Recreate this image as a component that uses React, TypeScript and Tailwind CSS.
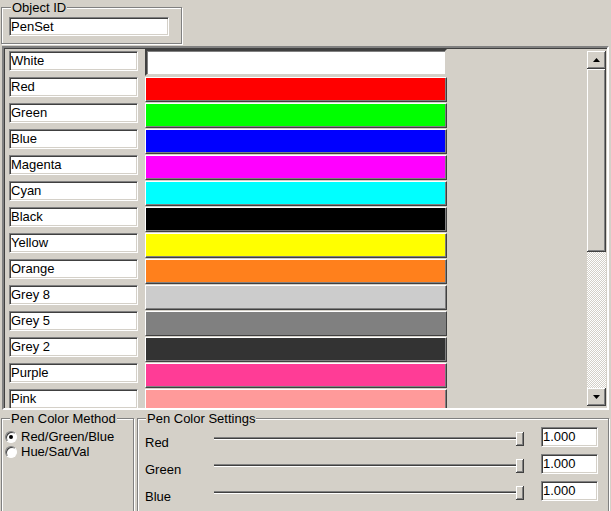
import React from "react";

const pens = [
  { name: "White", color: "#ffffff" },
  { name: "Red", color: "#ff0000" },
  { name: "Green", color: "#00ff00" },
  { name: "Blue", color: "#0000ff" },
  { name: "Magenta", color: "#ff00ff" },
  { name: "Cyan", color: "#00ffff" },
  { name: "Black", color: "#000000" },
  { name: "Yellow", color: "#ffff00" },
  { name: "Orange", color: "#ff801c" },
  { name: "Grey 8", color: "#cccccc" },
  { name: "Grey 5", color: "#808080" },
  { name: "Grey 2", color: "#333333" },
  { name: "Purple", color: "#ff3c96" },
  { name: "Pink", color: "#ff9a9a" },
];

const raised =
  "bg-[#d4d0c8] shadow-[inset_-1px_-1px_0_#404040,inset_1px_1px_0_#ffffff,inset_-2px_-2px_0_#808080,inset_2px_2px_0_#d4d0c8]";
const sunken =
  "bg-white border border-t-[#808080] border-l-[#808080] border-b-white border-r-white shadow-[inset_1px_1px_0_#404040,inset_-1px_-1px_0_#d4d0c8]";
const etched =
  "border border-[#808080] shadow-[inset_1px_1px_0_#ffffff,1px_1px_0_#ffffff]";

function Arrow({ up }: { up?: boolean }) {
  return (
    <svg width="7" height="4" viewBox="0 0 7 4">
      <polygon points={up ? "3.5,0 7,4 0,4" : "0,0 7,0 3.5,4"} fill="#000" />
    </svg>
  );
}

function Radio({ checked, label }: { checked?: boolean; label: string }) {
  return (
    <div className="flex h-[15px] items-center gap-[4px]">
      <div className="flex h-[12px] w-[12px] items-center justify-center rounded-full border border-t-[#808080] border-l-[#808080] border-b-white border-r-white bg-white shadow-[inset_1px_1px_0_#404040]">
        {checked && <div className="h-[4px] w-[4px] rounded-full bg-black" />}
      </div>
      <span>{label}</span>
    </div>
  );
}

function SliderRow({ label }: { label: string }) {
  return (
    <div className="flex h-[27px] items-start">
      <div className="mt-[8px] w-[69px]">{label}</div>
      <div className="relative h-[20px] w-[310px]">
        <div className="absolute left-0 right-[3px] top-[10px] h-[3px] border-y border-t-[#808080] border-b-white bg-[#404040]" />
        <div className={`absolute right-0 top-[5px] h-[14px] w-[8px] ${raised}`} />
      </div>
      <div className={`ml-[17px] h-[20px] w-[57px] pl-[1px] pt-[1px] ${sunken}`}>1.000</div>
    </div>
  );
}

export default function App() {
  return (
    <div className="h-[511px] w-[611px] overflow-hidden bg-[#d4d0c8] font-['Liberation_Sans',Arial,sans-serif] text-[13px] leading-[15px] text-black">
      {/* OBJECT ID */}
      <div className={`relative ml-[1px] mt-[7px] h-[37px] w-[181px] ${etched}`}>
        <span className="absolute -top-[8px] left-[9px] bg-[#d4d0c8] px-[1px]">Object ID</span>
        <div className={`ml-[7px] mt-[9px] h-[19px] w-[160px] pl-[1px] pt-[1px] ${sunken}`}>PenSet</div>
      </div>

      {/* PEN LIST */}
      <div className="ml-[2px] mt-[2px] flex h-[364px] w-[607px] border-2 border-t-[#808080] border-l-[#808080] border-b-white border-r-white shadow-[inset_1px_1px_0_#404040]">
        <div className="flex-1 overflow-hidden pl-[5px] pt-[3px]">
          {pens.map((p, i) => (
            <div key={p.name} className="flex h-[26px] items-start gap-[7px]">
              <div className={`h-[20px] w-[129px] pl-[1px] pt-[1px] ${sunken}`}>{p.name}</div>
              {i === 0 ? (
                <div
                  className="-mt-[2px] h-[27px] w-[302px] border-2 border-t-[#404040] border-l-[#404040] border-b-[#d4d0c8] border-r-[#d4d0c8] shadow-[inset_1px_1px_0_#808080]"
                  style={{ background: p.color }}
                />
              ) : (
                <div
                  className="h-[25px] w-[302px] border border-t-white border-l-white border-b-[#404040] border-r-[#404040] shadow-[inset_-1px_-1px_0_#808080]"
                  style={{ background: p.color }}
                />
              )}
            </div>
          ))}
        </div>

        {/* SCROLLBAR */}
        <div className="mb-[2px] mr-[1px] mt-[3px] flex w-[19px] flex-col">
          <div className={`flex h-[18px] items-center justify-center ${raised}`}>
            <Arrow up />
          </div>
          <div className={`h-[183px] ${raised}`} />
          <div className="flex-1 bg-[image:repeating-conic-gradient(#ffffff_0%_25%,#d4d0c8_0%_50%)] bg-[length:2px_2px]" />
          <div className={`flex h-[18px] items-center justify-center ${raised}`}>
            <Arrow />
          </div>
        </div>
      </div>

      {/* BOTTOM GROUPS */}
      <div className="mt-[8px] flex">
        <div className={`relative ml-[1px] h-[110px] w-[133px] pl-[3px] pt-[10px] ${etched}`}>
          <span className="absolute -top-[8px] left-[8px] bg-[#d4d0c8] px-[1px]">Pen Color Method</span>
          <Radio checked label="Red/Green/Blue" />
          <Radio label="Hue/Sat/Val" />
        </div>
        <div className={`relative ml-[3px] h-[110px] w-[472px] pl-[7px] pt-[8px] ${etched}`}>
          <span className="absolute -top-[8px] left-[8px] bg-[#d4d0c8] px-[1px]">Pen Color Settings</span>
          <SliderRow label="Red" />
          <SliderRow label="Green" />
          <SliderRow label="Blue" />
        </div>
      </div>
    </div>
  );
}
